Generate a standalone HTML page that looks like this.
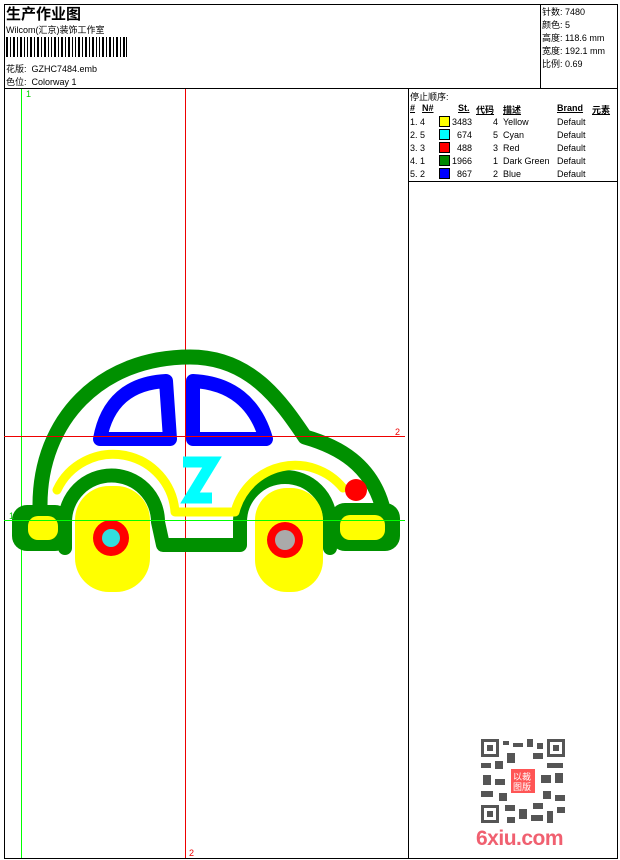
<!DOCTYPE html>
<html><head><meta charset="utf-8"><style>
body{margin:0;background:#fff;width:620px;height:860px;position:relative;overflow:hidden;font-family:"Liberation Sans","Noto Sans CJK SC",sans-serif;font-size:9px;color:#000}
.a{position:absolute;white-space:nowrap}
</style></head><body>
<div class="a" style="left:4px;top:4px;width:612px;height:853px;border:1px solid #000"></div>
<div class="a" style="left:4px;top:88px;width:613px;border-top:1px solid #000"></div>
<div class="a" style="left:540px;top:4px;height:84px;border-left:1px solid #000"></div>
<div class="a" style="left:408px;top:88px;height:770px;border-left:1px solid #000"></div>
<div class="a" style="left:408px;top:181px;width:209px;border-top:1px solid #000"></div>
<div class="a" style="left:6px;top:3px;font-size:15px;font-weight:bold">生产作业图</div>
<div class="a" style="left:6px;top:23px">Wilcom(汇京)装饰工作室</div>
<svg class="a" style="left:6px;top:37px" width="122" height="20"><g fill="#000">
<rect x="0" y="0" width="2" height="20"/><rect x="4" y="0" width="1" height="20"/><rect x="7" y="0" width="2" height="20"/><rect x="11" y="0" width="1" height="20"/><rect x="14" y="0" width="2" height="20"/><rect x="18" y="0" width="1" height="20"/><rect x="21" y="0" width="1" height="20"/><rect x="24" y="0" width="2" height="20"/><rect x="28" y="0" width="1" height="20"/><rect x="31" y="0" width="2" height="20"/><rect x="35" y="0" width="1" height="20"/><rect x="38" y="0" width="2" height="20"/><rect x="42" y="0" width="1" height="20"/><rect x="45" y="0" width="1" height="20"/><rect x="48" y="0" width="2" height="20"/><rect x="52" y="0" width="1" height="20"/><rect x="55" y="0" width="2" height="20"/><rect x="59" y="0" width="1" height="20"/><rect x="62" y="0" width="2" height="20"/><rect x="66" y="0" width="1" height="20"/><rect x="69" y="0" width="1" height="20"/><rect x="72" y="0" width="2" height="20"/><rect x="76" y="0" width="1" height="20"/><rect x="79" y="0" width="2" height="20"/><rect x="83" y="0" width="1" height="20"/><rect x="86" y="0" width="2" height="20"/><rect x="90" y="0" width="1" height="20"/><rect x="93" y="0" width="1" height="20"/><rect x="96" y="0" width="2" height="20"/><rect x="100" y="0" width="1" height="20"/><rect x="103" y="0" width="2" height="20"/><rect x="107" y="0" width="1" height="20"/><rect x="110" y="0" width="2" height="20"/><rect x="114" y="0" width="1" height="20"/><rect x="117" y="0" width="2" height="20"/><rect x="120" y="0" width="1" height="20"/></g></svg>
<div class="a" style="left:6px;top:62px">花版:&nbsp; GZHC7484.emb</div>
<div class="a" style="left:6px;top:75px">色位:&nbsp; Colorway 1</div>
<div class="a" style="left:542px;top:6px;line-height:13px">针数: 7480<br>颜色: 5<br>高度: 118.6 mm<br>宽度: 192.1 mm<br>比例: 0.69</div>
<div class="a" style="left:410px;top:90px">停止顺序:</div>
<div class="a" style="left:410px;top:103px;font-weight:bold;text-decoration:underline">#</div>
<div class="a" style="left:422px;top:103px;font-weight:bold;text-decoration:underline">N#</div>
<div class="a" style="left:458px;top:103px;font-weight:bold;text-decoration:underline">St.</div>
<div class="a" style="left:476px;top:103px;font-weight:bold;text-decoration:underline">代码</div>
<div class="a" style="left:503px;top:103px;font-weight:bold;text-decoration:underline">描述</div>
<div class="a" style="left:557px;top:103px;font-weight:bold;text-decoration:underline">Brand</div>
<div class="a" style="left:592px;top:103px;font-weight:bold;text-decoration:underline">元素</div>
<div class="a" style="left:410px;top:116px;line-height:13px">1. 4<br>2. 5<br>3. 3<br>4. 1<br>5. 2</div>
<div class="a" style="left:439px;top:116px;width:9px;height:9px;background:#ff0;border:1px solid #000"></div>
<div class="a" style="left:439px;top:129px;width:9px;height:9px;background:#0ff;border:1px solid #000"></div>
<div class="a" style="left:439px;top:142px;width:9px;height:9px;background:#f00;border:1px solid #000"></div>
<div class="a" style="left:439px;top:155px;width:9px;height:9px;background:#080;border:1px solid #000"></div>
<div class="a" style="left:439px;top:168px;width:9px;height:9px;background:#00f;border:1px solid #000"></div>
<div class="a" style="left:450px;top:116px;line-height:13px;width:22px;text-align:right">3483<br>674<br>488<br>1966<br>867</div>
<div class="a" style="left:493px;top:116px;line-height:13px">4<br>5<br>3<br>1<br>2</div>
<div class="a" style="left:503px;top:116px;line-height:13px">Yellow<br>Cyan<br>Red<br>Dark Green<br>Blue</div>
<div class="a" style="left:557px;top:116px;line-height:13px">Default<br>Default<br>Default<br>Default<br>Default</div>
<svg class="a" style="left:0;top:0" width="408" height="860">
<line x1="21.5" y1="89" x2="21.5" y2="858" stroke="#0f0"/>
<line x1="185.5" y1="89" x2="185.5" y2="858" stroke="#e00"/>
<text x="26" y="97" fill="#0c0" font-size="9" font-family="Liberation Sans">1</text>
<g fill="none" stroke-linecap="round" stroke-linejoin="round">
<path d="M40,505 C40,420 100,357 190,357 C250,357 280,400 305,437 C340,447 370,465 382,505" stroke="#009000" stroke-width="15"/>
<rect x="12" y="505" width="58" height="46" rx="15" fill="#009000" stroke="none"/>
<rect x="28" y="516" width="30" height="24" rx="10" fill="#ff0" stroke="none"/>
<rect x="330" y="503" width="70" height="48" rx="15" fill="#009000" stroke="none"/>
<rect x="340" y="515" width="45" height="25" rx="10" fill="#ff0" stroke="none"/>
<path d="M65,548 L65,522 A45,45 0 0 1 158,522 L163,545 L240,545 L240,522 A45,45 0 0 1 330,522 L330,548" stroke="#009000" stroke-width="14"/>
<path d="M57,490 A62,62 0 0 1 175,512 L235,512 A62,62 0 0 1 343,488" stroke="#ff0" stroke-width="9"/>
<path d="M100,439 Q110,384 166,381 L170,439 Z" stroke="#0000ff" stroke-width="14"/>
<path d="M193,381 Q250,384 266,439 L193,439 Z" stroke="#0000ff" stroke-width="14"/>
<path d="M183,462 L212,462 L190,498 L212,498" stroke="#0ff" stroke-width="11" stroke-linecap="butt" stroke-linejoin="miter"/>
</g>
<rect x="75" y="486" width="75" height="106" rx="34" fill="#ff0"/>
<rect x="255" y="488" width="68" height="104" rx="32" fill="#ff0"/>
<circle cx="111" cy="538" r="18" fill="#f00"/><circle cx="111" cy="538" r="9" fill="#3dd"/>
<circle cx="285" cy="540" r="18" fill="#f00"/><circle cx="285" cy="540" r="10" fill="#aaa"/>
<circle cx="356" cy="490" r="11" fill="#f00"/>
<line x1="4" y1="436.5" x2="405" y2="436.5" stroke="#e00"/>
<line x1="4" y1="520.5" x2="405" y2="520.5" stroke="#0f0"/>
<text x="395" y="435" fill="#e00" font-size="9" font-family="Liberation Sans">2</text>
<text x="9" y="519" fill="#0c0" font-size="9" font-family="Liberation Sans">1</text>
<text x="189" y="856" fill="#e00" font-size="9" font-family="Liberation Sans">2</text>
</svg>
<svg class="a" style="left:481px;top:739px" width="84" height="84">
<rect width="84" height="84" fill="#fff"/>
<g fill="#555"><rect x="0" y="0" width="18" height="18"/><rect x="66" y="0" width="18" height="18"/><rect x="0" y="66" width="18" height="18"/></g>
<g fill="#fff"><rect x="3" y="3" width="12" height="12"/><rect x="69" y="3" width="12" height="12"/><rect x="3" y="69" width="12" height="12"/></g>
<g fill="#555"><rect x="6" y="6" width="6" height="6"/><rect x="72" y="6" width="6" height="6"/><rect x="6" y="72" width="6" height="6"/>
<rect x="22" y="2" width="6" height="4"/><rect x="32" y="4" width="10" height="4"/><rect x="46" y="0" width="6" height="8"/><rect x="56" y="4" width="6" height="6"/>
<rect x="0" y="24" width="10" height="5"/><rect x="14" y="22" width="8" height="8"/><rect x="26" y="14" width="8" height="10"/><rect x="52" y="14" width="10" height="6"/><rect x="66" y="24" width="16" height="5"/>
<rect x="2" y="36" width="8" height="10"/><rect x="14" y="40" width="10" height="6"/><rect x="60" y="36" width="10" height="8"/><rect x="74" y="34" width="8" height="10"/>
<rect x="0" y="52" width="12" height="6"/><rect x="18" y="54" width="8" height="8"/><rect x="62" y="52" width="8" height="8"/><rect x="74" y="56" width="10" height="6"/>
<rect x="24" y="66" width="10" height="6"/><rect x="38" y="70" width="8" height="10"/><rect x="52" y="64" width="10" height="6"/><rect x="66" y="72" width="6" height="12"/><rect x="76" y="68" width="8" height="6"/><rect x="26" y="78" width="8" height="6"/><rect x="50" y="76" width="12" height="6"/></g>
<rect x="30" y="30" width="24" height="24" fill="#f55"/>
<text x="32" y="41" fill="#fff" font-size="9" font-family="Noto Sans CJK SC">以裁</text><text x="32" y="51" fill="#fff" font-size="9" font-family="Noto Sans CJK SC">图版</text>
</svg>
<div class="a" style="left:476px;top:827px;font-size:21px;font-weight:bold;color:#f06070;letter-spacing:-0.5px">6xiu.com</div>
</body></html>
